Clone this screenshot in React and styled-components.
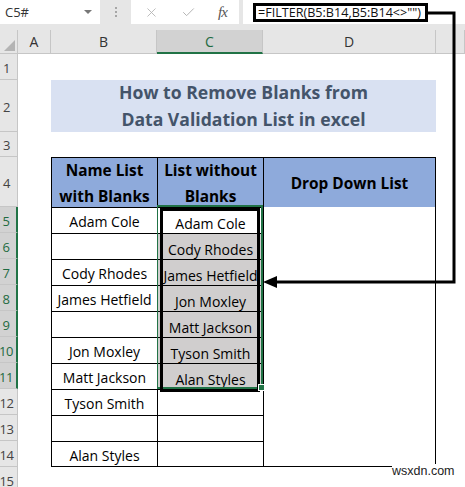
import React from 'react';
import styled, { createGlobalStyle } from 'styled-components';
import { X, Check } from 'lucide-react';

const GlobalStyle = createGlobalStyle`
  html, body {
    margin: 0;
    padding: 0;
    background: #ffffff;
  }
  body {
    font-family: "Open Sans", "Liberation Sans", sans-serif;
    color: #000;
  }
`;

const Page = styled.div`
  position: relative;
  width: 465px;
  height: 487px;
  overflow: hidden;
  background: #fff;
`;

/* ---------- formula bar ---------- */

const TopBar = styled.div`
  display: flex;
  align-items: flex-start;
  height: 30px;
  background: #e6e6e6;
`;

const NameBox = styled.div`
  width: 100px;
  height: 24px;
  box-sizing: border-box;
  background: #fff;
  display: flex;
  align-items: center;
  justify-content: space-between;
  padding: 0 8px 0 5px;
  font-size: 13px;
  color: #333;
`;

const Caret = styled.span`
  width: 0;
  height: 0;
  border-left: 4px solid transparent;
  border-right: 4px solid transparent;
  border-top: 4px solid #777;
`;

const Grip = styled.div`
  width: 31px;
  height: 24px;
  display: flex;
  flex-direction: column;
  align-items: center;
  justify-content: center;
  gap: 2px;
`;

const GripDot = styled.span`
  width: 2px;
  height: 2px;
  background: #a6a6a6;
`;

const FxBox = styled.div`
  width: 108px;
  height: 24px;
  background: #fff;
  display: flex;
  align-items: center;
  padding-left: 13px;
  box-sizing: border-box;
  gap: 22px;
  color: #b4b4b4;
`;

const FxLabel = styled.span`
  font-family: "Liberation Serif", serif;
  font-style: italic;
  font-size: 15px;
  color: #555;
  letter-spacing: -1px;
`;

const FormulaInput = styled.div`
  flex: 1;
  height: 24px;
  margin-left: 4px;
  background: #fff;
  display: flex;
  align-items: center;
  padding-left: 10px;
`;

const FormulaText = styled.div`
  box-sizing: border-box;
  height: 19px;
  width: 175px;
  border: 3px solid #000;
  display: flex;
  align-items: center;
  padding-left: 2px;
  font-size: 12.6px;
  color: #111;
  white-space: nowrap;
`;

/* ---------- sheet grid ---------- */

const Sheet = styled.div`
  display: grid;
  grid-template-columns: 18px 33px 106px 106px 173px 1fr;
  grid-template-rows: 24px 26px 52px 25px 50px repeat(11, 26px);
`;

const Corner = styled.div`
  grid-row: 1;
  grid-column: 1;
  position: relative;
  background: #e6e6e6;
  border-right: 1px solid #c6c6c6;
  border-bottom: 1px solid #c6c6c6;
  &::after {
    content: '';
    position: absolute;
    right: 2px;
    bottom: 2px;
    border-left: 11px solid transparent;
    border-bottom: 11px solid #b4b4b4;
  }
`;

const ColHead = styled.div`
  grid-row: 1;
  grid-column: ${p => p.$c};
  display: flex;
  align-items: center;
  justify-content: center;
  font-size: 14px;
  color: ${p => (p.$active ? '#1e6b41' : '#333')};
  background: ${p => (p.$active ? '#d2d2d2' : '#e6e6e6')};
  border-right: 1px solid #c6c6c6;
  border-bottom: ${p => (p.$active ? '2px solid #217346' : '1px solid #c6c6c6')};
`;

const RowHead = styled.div`
  grid-row: ${p => p.$r};
  grid-column: 1;
  display: flex;
  align-items: center;
  justify-content: center;
  padding: 2px 4px 0 0;
  font-size: 13px;
  letter-spacing: -0.5px;
  color: ${p => (p.$active ? '#1e6b41' : '#444')};
  background: ${p => (p.$active ? '#d2d2d2' : '#e6e6e6')};
  border-bottom: 1px solid #c6c6c6;
  border-right: ${p => (p.$active ? '2px solid #217346' : '1px solid #c6c6c6')};
`;

const Title = styled.div`
  grid-row: 3;
  grid-column: 3 / 6;
  background: #d9e1f2;
  display: flex;
  align-items: center;
  justify-content: center;
  text-align: center;
  font-weight: 700;
  font-size: 17.6px;
  line-height: 27px;
  color: #44546a;
`;

const HeadCell = styled.div`
  grid-row: 5;
  grid-column: ${p => p.$c};
  background: #8eaadb;
  display: flex;
  align-items: center;
  justify-content: center;
  text-align: center;
  font-weight: 700;
  font-size: 15.4px;
  line-height: 26px;
  padding-top: 2px;
  border-top: 1px solid #000;
  border-left: 1px solid #000;
  border-right: ${p => (p.$last ? '1px solid #000' : 'none')};
`;

const Cell = styled.div`
  grid-row: ${p => p.$r};
  grid-column: ${p => p.$c};
  display: flex;
  align-items: center;
  justify-content: center;
  padding-top: ${p => (p.$c === 4 ? '5px' : '2px')};
  font-size: 14px;
  white-space: nowrap;
  background: ${p => (p.$fill ? '#d0cece' : '#fff')};
  border-left: 1px solid #000;
  border-top: ${p => (p.$lined ? '1px solid #000' : 'none')};
  border-right: ${p => (p.$last ? '1px solid #000' : 'none')};
  border-bottom: ${p => (p.$bottom ? '1px solid #000' : 'none')};
`;

/* selected range C5:C11 with the spill outline */
const Selection = styled.div`
  grid-row: 6 / 13;
  grid-column: 4;
  position: relative;
  z-index: 2;
  margin-top: -2px;
  display: flex;
  border: 2px solid #217346;
  border-left-width: 1px;
  pointer-events: none;
`;

const SpillBox = styled.div`
  flex: 1;
  margin: 1px 1px -5px 2px;
  border: 3px solid #000;
`;

const FillHandle = styled.span`
  position: absolute;
  right: -4px;
  bottom: -4px;
  width: 5px;
  height: 5px;
  background: #217346;
  border: 1px solid #fff;
`;

const Overlay = styled.svg`
  position: absolute;
  left: 0;
  top: 0;
  pointer-events: none;
  z-index: 5;
`;

const Watermark = styled.div`
  position: absolute;
  left: 392px;
  top: 464px;
  font-family: "Liberation Sans", Arial, sans-serif;
  font-size: 12.5px;
  color: #222;
  background: #fff;
  z-index: 6;
`;

const columns = ['A', 'B', 'C', 'D', ''];

const names = [
  'Adam Cole',
  '',
  'Cody Rhodes',
  'James Hetfield',
  '',
  'Jon Moxley',
  'Matt Jackson',
  'Tyson Smith',
  '',
  'Alan Styles',
];

const filtered = [
  'Adam Cole',
  'Cody Rhodes',
  'James Hetfield',
  'Jon Moxley',
  'Matt Jackson',
  'Tyson Smith',
  'Alan Styles',
  '',
  '',
  '',
];

function FormulaBar() {
  return (
    <TopBar>
      <NameBox>
        C5#
        <Caret />
      </NameBox>
      <Grip>
        <GripDot />
        <GripDot />
        <GripDot />
      </Grip>
      <FxBox>
        <X size={15} strokeWidth={1.4} />
        <Check size={15} strokeWidth={1.6} />
        <FxLabel>fx</FxLabel>
      </FxBox>
      <FormulaInput>
        <FormulaText>=FILTER(B5:B14,B5:B14&lt;&gt;"")</FormulaText>
      </FormulaInput>
    </TopBar>
  );
}

function Grid() {
  const rows = [];
  for (let n = 1; n <= 15; n++) {
    rows.push(
      <RowHead key={'r' + n} $r={n + 1} $active={n >= 5 && n <= 11}>
        {n}
      </RowHead>
    );
  }

  const body = [];
  for (let i = 0; i < 10; i++) {
    const r = i + 6;
    const last = i === 9;
    const inSpill = i < 7;
    body.push(
      <Cell key={'b' + i} $r={r} $c={3} $lined $bottom={last}>
        {names[i]}
      </Cell>,
      <Cell key={'c' + i} $r={r} $c={4} $lined $bottom={last} $fill={inSpill && i > 0}>
        {filtered[i]}
      </Cell>,
      <Cell key={'d' + i} $r={r} $c={5} $last $bottom={last} />
    );
  }

  return (
    <Sheet>
      <Corner />
      {columns.map((c, i) => (
        <ColHead key={'h' + i} $c={i + 2} $active={c === 'C'}>
          {c}
        </ColHead>
      ))}
      {rows}
      <Title>
        How to Remove Blanks from
        <br />
        Data Validation List in excel
      </Title>
      <HeadCell $c={3}>
        Name List
        <br />
        with Blanks
      </HeadCell>
      <HeadCell $c={4}>
        List without
        <br />
        Blanks
      </HeadCell>
      <HeadCell $c={5} $last>
        Drop Down List
      </HeadCell>
      {body}
      <Selection>
        <SpillBox />
        <FillHandle />
      </Selection>
    </Sheet>
  );
}

function App() {
  return (
    <Page>
      <GlobalStyle />
      <FormulaBar />
      <Grid />
      {/* connector from the formula to the spilled range */}
      <Overlay width="465" height="487" viewBox="0 0 465 487">
        <path
          d="M428 13 H454 V282 H274"
          fill="none"
          stroke="#000"
          strokeWidth="3"
          strokeLinejoin="miter"
        />
        <polygon points="263,282 277,276 277,288" fill="#000" />
      </Overlay>
      <Watermark>wsxdn.com</Watermark>
    </Page>
  );
}

export default App;
